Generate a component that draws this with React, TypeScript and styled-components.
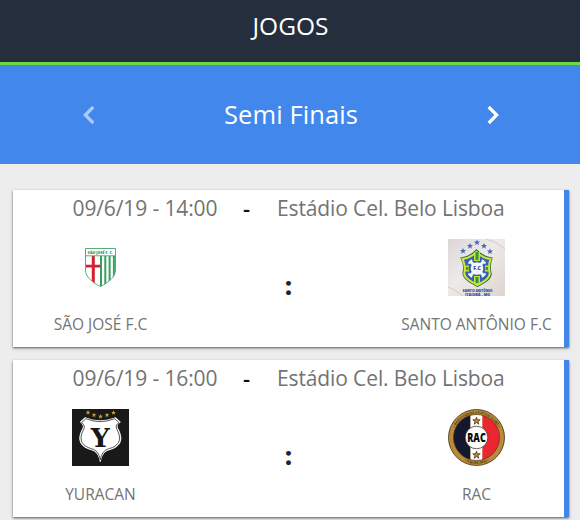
import React from "react";
import styled, { createGlobalStyle } from "styled-components";

const GlobalStyle = createGlobalStyle`
  * { box-sizing: border-box; }
  html, body { margin: 0; height: 520px; overflow: hidden; background: #ededed; }
  body { font-family: "Open Sans", "Noto Sans", sans-serif; }
`;

const Screen = styled.main`
  width: 580px;
  height: 520px;
  overflow: hidden;
  background: #ededed;
`;

const TopBar = styled.header`
  height: 65px;
  display: flex;
  justify-content: center;
  background: #252e3d;
  border-bottom: 3px solid #66dd3d;
`;

const Title = styled.h1`
  margin: 0;
  padding: 9px 0 0 1px;
  font-size: 24.5px;
  line-height: 34px;
  font-weight: 400;
  color: #fff;
`;

const PhaseBar = styled.nav`
  height: 99px;
  display: grid;
  grid-template-columns: 178px 1fr 175px;
  align-items: center;
  justify-items: center;
  background: #4287ec;
  color: #fff;
`;

const PhaseName = styled.h2`
  margin: 0 1px 2px 0;
  font-size: 25.5px;
  line-height: 34px;
  font-weight: 400;
  letter-spacing: 0.1px;
`;

const ArrowButton = styled.button<{ $dim?: boolean }>`
  display: flex;
  padding: 0;
  border: 0;
  background: none;
  color: ${(p) => (p.$dim ? "#a9cbf8" : "#fff")};
`;

const MatchList = styled.section`
  display: flex;
  flex-direction: column;
  gap: 13px;
  padding: 26px 11px 0 13px;
`;

const MatchCard = styled.article`
  height: 157px;
  flex: none;
  background: #fff;
  border-right: 5px solid #4285e8;
  box-shadow: 0 1px 2px rgba(0, 0, 0, 0.55), 0 2px 4px rgba(0, 0, 0, 0.12);
`;

const MatchInfo = styled.div`
  display: flex;
  height: 49px;
  padding: 3px 0 0 59.5px;
  font-size: 21px;
  line-height: 30px;
  font-weight: 400;
  color: #737373;
  white-space: nowrap;
`;

const DateText = styled.time`
  width: 170.5px;
  letter-spacing: -0.12px;
`;

const Separator = styled.span`
  width: 34px;
  color: #111;
  font-size: 22px;
  font-weight: 600;
`;

const Venue = styled.span`
  letter-spacing: -0.12px;
`;

const Teams = styled.div`
  display: grid;
  grid-template-columns: 175px 1fr 175px;
`;

const Team = styled.div`
  display: flex;
  flex-direction: column;
  align-items: center;
  gap: 17px;
`;

const TeamName = styled.span`
  font-size: 15.5px;
  line-height: 22px;
  font-weight: 400;
  color: #747474;
  white-space: nowrap;
`;

const Score = styled.div`
  padding-top: 30px;
  text-align: center;
  font-size: 24px;
  line-height: 34px;
  font-weight: 800;
  color: #1c2430;
`;

const Crest = styled.svg`
  display: block;
  width: 57px;
  height: 57px;
`;

const STAR = "M0-3.2.8-1 3.1-1 1.3.4 1.9 2.7 0 1.3-1.9 2.7-1.3.4-3.1-1-.8-1Z";

function Stars({ at, fill, size = 1 }: { at: number[][]; fill: string; size?: number }) {
  return (
    <g fill={fill}>
      {at.map(([x, y]) => (
        <path key={`${x}-${y}`} d={STAR} transform={`translate(${x} ${y}) scale(${size})`} />
      ))}
    </g>
  );
}

function SaoJoseCrest() {
  return (
    <Crest viewBox="0 0 57 57">
      <clipPath id="sj"><path d="M13.5 9.5h30V31c0 7-7 12.500-15 16.500-8-4-15-9.500-15-16.500Z" /></clipPath>
      <g clipPath="url(#sj)">
        <path fill="#fff" d="M13 9h31v40H13z" />
        <path fill="#32a25c" d="M28 17h2v32h-2zM32.300 17h2v32h-2zM36.600 17h2v32h-2zM40.900 17h2v32h-2z" />
        <path fill="#d5202f" d="M19.800 17h3v29h-3zM14 25.700h14.500v2.800H14z" />
      </g>
      <path d="M13.500 9.500h30V31c0 7-7 12.500-15 16.500-8-4-15-9.500-15-16.500ZM13.500 16.800h30" fill="none" stroke="#45a36a" strokeWidth=".9" />
      <text x="28.300" y="14.600" textAnchor="middle" fontFamily="Open Sans, sans-serif" fontSize="3.900" fontWeight="800" textLength="25" lengthAdjust="spacingAndGlyphs" fill="#2f9558">SÃO JOSÉ F. C.</text>
    </Crest>
  );
}

function SantoAntonioCrest() {
  return (
    <Crest viewBox="0 0 57 57">
      <linearGradient id="cloth" x2="1" y2="1">
        <stop stopColor="#dcd7d7" /><stop offset=".45" stopColor="#eeeae9" /><stop offset="1" stopColor="#ded5d1" />
      </linearGradient>
      <path fill="url(#cloth)" d="M0 0h57v57H0z" />
      <path d="M38 0q10 2 19 10M0 48q8 3 15 9" stroke="#d2c9c6" fill="none" />
      <Stars fill="#3e67bd" at={[[15, 12], [22, 7], [29, 3.500], [36, 7], [42, 12.500]]} />
      <path d="M13 19q9-1 15.500-8Q35 18 44 19q-3 7-1 15c1 6-7 10-13.500 13.500C23 44 15 40 15 34q2-8-2-15Z" fill="#3760b8" stroke="#31733f" strokeWidth="1.200" />
      <path d="M14.500 20q8-1 14-7Q34 19 42.500 20q-2.500 7-.8 14c.5 5-6 8.500-12.200 12C23 42.500 16 39 16.300 34q1.700-7-1.800-14Z" fill="none" stroke="#cfe63c" strokeWidth="2" />
      <path d="M26 13h6v9h-6zM26 37h6v8h-6zM17 26.500h4v6h-4zM37 26.500h4v6h-4z" fill="#bfe23b" />
      <path d="M27.500 13h3v8h-3zM27.500 38h3v6h-3zM18 28h2.500v3H18zM37.500 28H40v3h-2.500z" fill="#36963f" />
      <path d="m22 22 14 15M36 22 22 37" stroke="#f5f6f8" strokeWidth="3" />
      <path d="M20.500 24.500l3.500-3.500M34 21l3.500 3.500M20.500 34.500l3.500 3.500M34 38l3.500-3.500" fill="none" stroke="#f5f6f8" strokeWidth="1.800" />
      <circle cx="29" cy="29.500" r="6.300" fill="#f5f6f8" />
      <g fontFamily="Open Sans, sans-serif" fontWeight="800" textAnchor="middle" fill="#294e9b">
        <text x="29" y="31.300" fontSize="4.800" textLength="7.500" lengthAdjust="spacingAndGlyphs">F.C</text>
        <text x="29.500" y="53" fontSize="3.800" textLength="30" lengthAdjust="spacingAndGlyphs">SANTO ANTÔNIO</text>
        <text x="29.500" y="56.800" fontSize="3.600" textLength="25" lengthAdjust="spacingAndGlyphs">ITAJUBÁ - MG</text>
      </g>
    </Crest>
  );
}

function YuracanCrest() {
  const shield =
    "M13 8.700Q28.300 15 43.600 8.700L48.300 13Q43 16 46.500 21C52 32 47 38 38 40.500 32 42 29.500 46 28.300 52.500 27 46 24.600 42 18.600 40.500 9.600 38 4.600 32 10.100 21 13.600 16 8.300 13 8.300 13Z";
  return (
    <Crest viewBox="0 0 57 57">
      <path fill="#191919" d="M0 0h57v57H0z" />
      <Stars fill="#c4a532" size={0.8} at={[[16, 3.500], [22, 6], [28.500, 7.500], [35, 6], [41.500, 3.700]]} />
      <path d={shield} fill="#fff" stroke="#fff" strokeWidth="1" />
      <path d={shield} fill="none" stroke="#222" strokeWidth=".8" transform="translate(1.700 1.500) scale(.94)" />
      <text x="28.200" y="37.700" textAnchor="middle" fontFamily="'DejaVu Serif', serif" fontWeight="700" fontSize="26" textLength="19" lengthAdjust="spacingAndGlyphs" fill="#171717">Y</text>
    </Crest>
  );
}

function RacCrest() {
  return (
    <Crest viewBox="0 0 57 57">
      <defs>
        <clipPath id="rac"><circle cx="28.500" cy="28.500" r="23" /></clipPath>
        <path id="racTop" d="M4.700 28.500a23.800 23.800 0 0 1 47.600 0" />
        <path id="racBottom" d="M2.200 28.500a26.300 26.300 0 0 0 52.600 0" />
      </defs>
      <circle cx="28.500" cy="28.500" r="28" fill="#b98b38" stroke="#3c2c16" strokeWidth=".8" />
      <g clipPath="url(#rac)">
        <path fill="#14182e" d="M0 0h22.500v57H0z" />
        <path fill="#fff" d="M22.500 0h12v57h-12z" />
        <path fill="#eb2630" d="M34.500 0H57v57H34.500z" />
      </g>
      <circle cx="28.500" cy="28.500" r="23" fill="none" stroke="#4a3320" strokeWidth=".7" />
      <path d={STAR} transform="translate(28.500 12) scale(1.200)" fill="#b98b38" stroke="#3c2c16" strokeWidth=".6" />
      <path d={STAR} transform="translate(28.500 46) scale(1.200)" fill="#b98b38" stroke="#3c2c16" strokeWidth=".6" />
      <circle cx="28.500" cy="28.500" r="11.300" fill="#fff" stroke="#222" strokeWidth=".7" />
      <text x="28.500" y="33" textAnchor="middle" fontFamily="Open Sans, sans-serif" fontWeight="800" fontSize="12.500" textLength="18.500" lengthAdjust="spacingAndGlyphs" fill="#080808">RAC</text>
      <g fontFamily="Open Sans, sans-serif" fontWeight="700" fontSize="3.200" fill="#4a3516" textAnchor="middle">
        <text><textPath href="#racTop" startOffset="50%">• RODOVIÁRIOS ATLÉTICO CLUBE •</textPath></text>
        <text><textPath href="#racBottom" startOffset="50%">• ITAJUBÁ (MG) •</textPath></text>
      </g>
    </Crest>
  );
}

type Side = { name: string; crest: React.ReactNode };
type Match = { date: string; venue: string; home: Side; away: Side };

const matches: Match[] = [
  {
    date: "09/6/19 - 14:00",
    venue: "Estádio Cel. Belo Lisboa",
    home: { name: "SÃO JOSÉ F.C", crest: <SaoJoseCrest /> },
    away: { name: "SANTO ANTÔNIO F.C", crest: <SantoAntonioCrest /> },
  },
  {
    date: "09/6/19 - 16:00",
    venue: "Estádio Cel. Belo Lisboa",
    home: { name: "YURACAN", crest: <YuracanCrest /> },
    away: { name: "RAC", crest: <RacCrest /> },
  },
];

function TeamBlock({ side }: { side: Side }) {
  return (
    <Team>
      {side.crest}
      <TeamName>{side.name}</TeamName>
    </Team>
  );
}

function Arrow({ d }: { d: string }) {
  return (
    <svg width="12" height="20" viewBox="0 0 12 20" fill="none" stroke="currentColor" strokeWidth="3.200">
      <path d={d} />
    </svg>
  );
}

export default function App() {
  return (
    <Screen>
      <GlobalStyle />
      <TopBar><Title>JOGOS</Title></TopBar>
      <PhaseBar>
        <ArrowButton $dim aria-label="Anterior"><Arrow d="M10.300 2 2.300 10l8 8" /></ArrowButton>
        <PhaseName>Semi Finais</PhaseName>
        <ArrowButton aria-label="Próxima"><Arrow d="m1.700 2 8 8-8 8" /></ArrowButton>
      </PhaseBar>
      <MatchList>
        {matches.map((m) => (
          <MatchCard key={m.date}>
            <MatchInfo>
              <DateText>{m.date}</DateText>
              <Separator>-</Separator>
              <Venue>{m.venue}</Venue>
            </MatchInfo>
            <Teams>
              <TeamBlock side={m.home} />
              <Score>:</Score>
              <TeamBlock side={m.away} />
            </Teams>
          </MatchCard>
        ))}
      </MatchList>
    </Screen>
  );
}
